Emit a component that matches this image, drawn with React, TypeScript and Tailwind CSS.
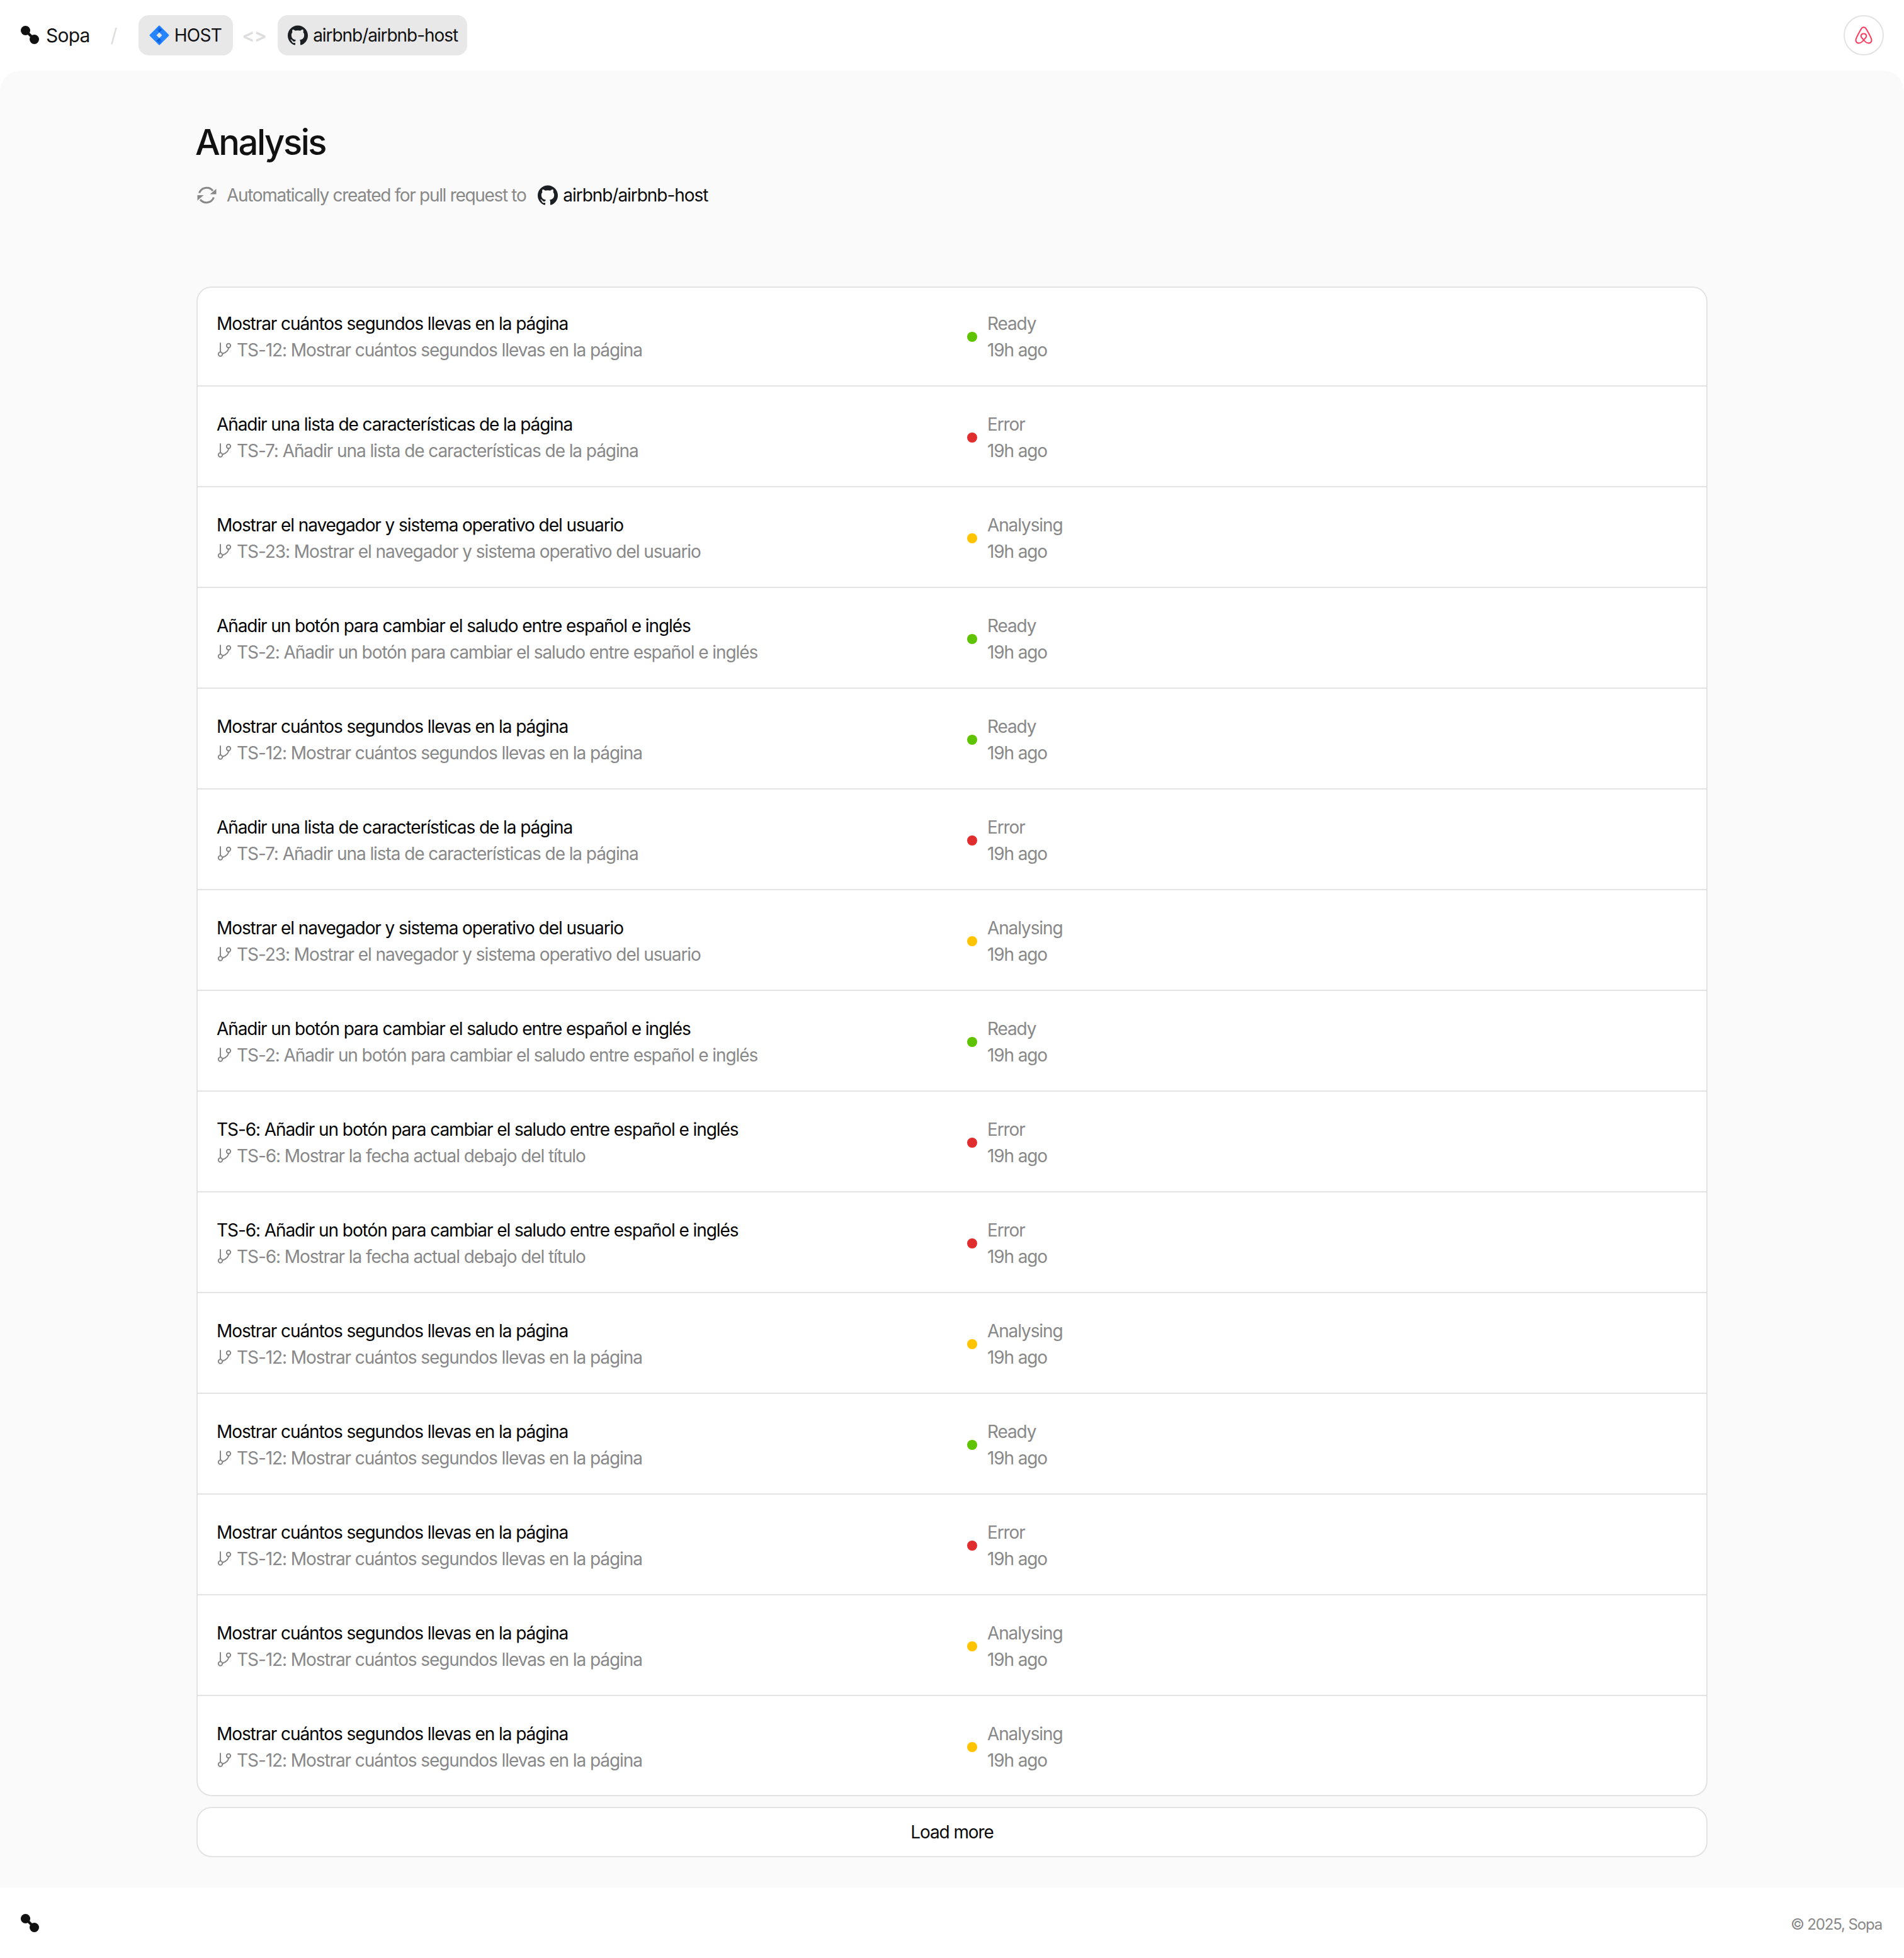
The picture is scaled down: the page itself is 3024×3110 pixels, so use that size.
import { SiGithub } from "react-icons/si";

type Status = "Ready" | "Error" | "Analysing";

const TITLE_SECONDS = "Mostrar cuántos segundos llevas en la página";
const TITLE_FEATURES = "Añadir una lista de características de la página";
const TITLE_BROWSER = "Mostrar el navegador y sistema operativo del usuario";
const TITLE_BUTTON = "Añadir un botón para cambiar el saludo entre español e inglés";

const rows: { title: string; branch: string; status: Status }[] = [
    { title: TITLE_SECONDS, branch: `TS-12: ${TITLE_SECONDS}`, status: "Ready" },
    { title: TITLE_FEATURES, branch: `TS-7: ${TITLE_FEATURES}`, status: "Error" },
    { title: TITLE_BROWSER, branch: `TS-23: ${TITLE_BROWSER}`, status: "Analysing" },
    { title: TITLE_BUTTON, branch: `TS-2: ${TITLE_BUTTON}`, status: "Ready" },
    { title: TITLE_SECONDS, branch: `TS-12: ${TITLE_SECONDS}`, status: "Ready" },
    { title: TITLE_FEATURES, branch: `TS-7: ${TITLE_FEATURES}`, status: "Error" },
    { title: TITLE_BROWSER, branch: `TS-23: ${TITLE_BROWSER}`, status: "Analysing" },
    { title: TITLE_BUTTON, branch: `TS-2: ${TITLE_BUTTON}`, status: "Ready" },
    { title: `TS-6: ${TITLE_BUTTON}`, branch: "TS-6: Mostrar la fecha actual debajo del título", status: "Error" },
    { title: `TS-6: ${TITLE_BUTTON}`, branch: "TS-6: Mostrar la fecha actual debajo del título", status: "Error" },
    { title: TITLE_SECONDS, branch: `TS-12: ${TITLE_SECONDS}`, status: "Analysing" },
    { title: TITLE_SECONDS, branch: `TS-12: ${TITLE_SECONDS}`, status: "Ready" },
    { title: TITLE_SECONDS, branch: `TS-12: ${TITLE_SECONDS}`, status: "Error" },
    { title: TITLE_SECONDS, branch: `TS-12: ${TITLE_SECONDS}`, status: "Analysing" },
    { title: TITLE_SECONDS, branch: `TS-12: ${TITLE_SECONDS}`, status: "Analysing" },
];

const dotColor: Record<Status, string> = {
    Ready: "bg-[#5fc300]",
    Error: "bg-[#e02d2d]",
    Analysing: "bg-[#ffc300]",
};

function SopaLogo({ className }: { className: string }) {
    return (
        <svg width="29" height="29" viewBox="0 0 29 29" fill="#111111" className={className}>
            <circle cx="7.5" cy="7.5" r="7.5" />
            <circle cx="21.5" cy="21.5" r="7.5" />
            <path d="M10 13 L13 10 L19 16 L16 19 Z" />
        </svg>
    );
}

function JiraLogo() {
    return (
        <svg width="32" height="32" viewBox="0 0 32 32" className="shrink-0">
            <defs>
                <linearGradient id="jira-top" x1="12" y1="4" x2="19" y2="9" gradientUnits="userSpaceOnUse">
                    <stop offset="0" stopColor="#2684ff" />
                    <stop offset="1" stopColor="#0052cc" />
                </linearGradient>
                <linearGradient id="jira-bottom" x1="20" y1="28" x2="13" y2="23" gradientUnits="userSpaceOnUse">
                    <stop offset="0" stopColor="#2684ff" />
                    <stop offset="1" stopColor="#0052cc" />
                </linearGradient>
            </defs>
            <path
                fillRule="evenodd"
                d="M15 1 Q16 0 17 1 L31 15 Q32 16 31 17 L17 31 Q16 32 15 31 L1 17 Q0 16 1 15 Z M16 11.5 L11.5 16 L16 20.5 L20.5 16 Z"
                fill="#2684ff"
            />
            <path d="M16 0.5 L10.5 6 L16 11.5 L20.5 7 C17.5 6 16 3.5 16 0.5 Z" fill="url(#jira-top)" />
            <path d="M16 31.5 L21.5 26 L16 20.5 L11.5 25 C14.5 26 16 28.5 16 31.5 Z" fill="url(#jira-bottom)" />
        </svg>
    );
}

function BranchIcon() {
    return (
        <svg width="24" height="24" viewBox="0 0 24 24" fill="none" stroke="#888888" strokeWidth="2" strokeLinecap="round" className="shrink-0">
            <path d="M6 1 V15" />
            <circle cx="6" cy="18.5" r="3.2" />
            <circle cx="19" cy="5" r="3.2" />
            <path d="M19 8.2 C19 13 14.5 16 9.2 18" />
        </svg>
    );
}

function RefreshIcon() {
    return (
        <svg width="32" height="32" viewBox="0 0 32 32" fill="none" className="shrink-0">
            <path d="M4.5 12.5 A12.5 12.5 0 0 1 26 9" stroke="#888888" strokeWidth="3" />
            <path d="M31.5 6 V14.5 H21.5 Z" fill="#888888" />
            <path d="M27.5 19.5 A12.5 12.5 0 0 1 6 23" stroke="#888888" strokeWidth="3" />
            <path d="M1.5 24.5 V16 H11.5 Z" fill="#888888" />
        </svg>
    );
}

function AirbnbLogo() {
    return (
        <svg width="28" height="28" viewBox="0 0 28 28" fill="none" stroke="#ff385c" strokeWidth="2" strokeLinejoin="round" className="shrink-0">
            <path d="M14 21.5 C16 24 18.5 26.5 21.5 26.5 C24.5 26.5 26.5 24.5 26.5 21.5 C26.5 19.5 25 16 18 4 C17 2 15.5 1.2 14 1.2 C12.5 1.2 11 2 10 4 C3 16 1.5 19.5 1.5 21.5 C1.5 24.5 3.5 26.5 6.5 26.5 C9.5 26.5 12 24 14 21.5 C16 19 18.3 17.5 18.3 15.5 C18.3 13 16.5 11.5 14 11.5 C11.5 11.5 9.7 13 9.7 15.5 C9.7 17.5 12 19 14 21.5 Z" />
        </svg>
    );
}

function RepoPill() {
    return (
        <div className="h-[64px] pl-4 pr-[15px] flex items-center gap-2 rounded-[16px] bg-[#e8e8e8]">
            <SiGithub size={32} color="#1b1f23" />
            <span className="tracking-[-1.05px]">airbnb/airbnb-host</span>
        </div>
    );
}

function Header() {
    return (
        <header className="h-[112px] px-8 flex items-center justify-between bg-white">
            <div className="flex items-center text-[28px] tracking-[-0.7px] text-[#111111]">
                <SopaLogo className="shrink-0 ml-px -mt-[2px]" />
                <span className="ml-[11px] text-[30px] tracking-[-0.8px]">Sopa</span>
                <span className="ml-[33px] mr-[34px] text-[30px] text-[#dddddd]">/</span>
                <div className="h-[64px] pl-[17px] pr-[18px] flex items-center gap-2 rounded-[16px] bg-[#e8e8e8]">
                    <JiraLogo />
                    <span>HOST</span>
                </div>
                <span className="ml-[14px] mr-[18px] text-[30px] font-semibold text-[#dddddd]">&lt;&gt;</span>
                <RepoPill />
            </div>
            <div className="w-[64px] h-[64px] rounded-full border-2 border-[#e3e3e3] flex items-center justify-center bg-white">
                <AirbnbLogo />
            </div>
        </header>
    );
}

function Row({ title, branch, status }: { title: string; branch: string; status: Status }) {
    return (
        <div className="h-[160px] pt-1 first:pt-0 first:h-[157px] last:h-[157px] px-[30px] flex items-center border-b-2 border-[#e3e3e3] last:border-b-0">
            <div className="w-[1192px] flex flex-col">
                <div className="text-[28px] leading-[42px] tracking-[-1.08px] text-[#050505]">{title}</div>
                <div className="flex items-center gap-2 text-[28px] leading-[42px] tracking-[-1.08px] text-[#888888]">
                    <BranchIcon />
                    <span>{branch}</span>
                </div>
            </div>
            <div className="flex items-center gap-4">
                <span className={`w-4 h-4 rounded-full ${dotColor[status]}`} />
                <div className="text-[28px] leading-[42px] tracking-[-1.12px] text-[#888888]">
                    <div>{status}</div>
                    <div>19h ago</div>
                </div>
            </div>
        </div>
    );
}

function Footer() {
    return (
        <footer className="h-[112px] px-8 flex items-center justify-between bg-white">
            <SopaLogo className="shrink-0 ml-px" />
            <span className="mt-[6px] mr-[3px] text-[24px] tracking-[-1.15px] text-[#888888]">© 2025, Sopa</span>
        </footer>
    );
}

export default function App() {
    return (
        <div className="w-[3024px] h-[3110px] bg-white font-['Inter','Liberation_Sans',sans-serif] overflow-hidden">
            <Header />
            <main className="h-[2886px] bg-[#fafafa] rounded-t-[32px] px-[312px] pt-[78px]">
                <h1 className="-ml-[2px] text-[56px] leading-[72px] font-medium tracking-[-2.4px] text-[#111111]">Analysis</h1>
                <div className="mt-[27px] flex items-center text-[28px] leading-[42px]">
                    <RefreshIcon />
                    <span className="ml-4 tracking-[-1.32px] text-[#888888]">Automatically created for pull request to</span>
                    <SiGithub size={32} color="#1b1f23" className="ml-[19px]" />
                    <span className="ml-2 tracking-[-1.05px] text-[#0a0a0a]">airbnb/airbnb-host</span>
                </div>
                <div className="mt-[124px] bg-white border-2 border-[#e3e3e3] rounded-[24px]">
                    {rows.map((row, i) => (
                        <Row key={i} {...row} />
                    ))}
                </div>
                <button className="mt-[17px] w-full h-[80px] bg-white border-2 border-[#e3e3e3] rounded-[24px] text-[28px] tracking-[-1.12px] text-[#0a0a0a]">
                    Load more
                </button>
            </main>
            <Footer />
        </div>
    );
}
